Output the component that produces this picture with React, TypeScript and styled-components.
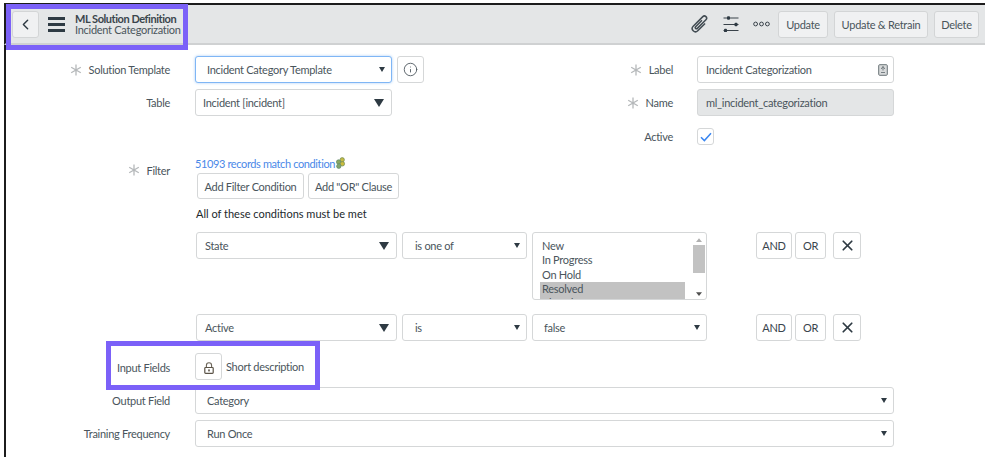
import React from 'react';
import styled, { createGlobalStyle } from 'styled-components';
import { ChevronLeft, Info, X } from 'lucide-react';

const GlobalStyle = createGlobalStyle`
  html, body {
    margin: 0;
    padding: 0;
    background: #fff;
    overflow: hidden;
  }
  body {
    font-family: "Lato", "Open Sans", sans-serif;
    font-size: 11px;
    letter-spacing: -0.28px;
    color: #4a555c;
  }
`;

const Asterisk = () => (
  <AsteriskIcon viewBox="0 0 12 12">
    <path d="M6 0.5v11M1.2 3.2l9.6 5.6M1.2 8.8l9.6-5.6" stroke="#b5b8ba" strokeWidth="1.3" fill="none" />
  </AsteriskIcon>
);

const Caret = ({ small }: { small?: boolean }) => (
  <CaretIcon $small={small} viewBox="0 0 10 8">
    <path d="M0 0h10L5 8z" fill="#2e3a43" />
  </CaretIcon>
);

const PaperclipIcon = () => (
  <svg width="18" height="18" viewBox="0 0 18 18">
    <g transform="rotate(45 9 9)" fill="none" stroke="#414b52" strokeWidth="1.5">
      <path d="M12.2 5v10.4a3.2 3.2 0 0 1-6.4 0V1.8a2.2 2.2 0 0 1 4.4 0V14a1.2 1.2 0 0 1-2.4 0V5" />
    </g>
  </svg>
);

const SlidersIcon = () => (
  <svg width="16" height="16" viewBox="0 0 16 16">
    <path d="M0.5 2h15M0.5 8.5h15M0.5 14.5h15" stroke="#39424a" strokeWidth="1.1" />
    <rect x="4" y="0.3" width="3" height="3.4" rx="1" fill="#2e3a43" />
    <rect x="11.5" y="6.8" width="3" height="3.4" rx="1" fill="#2e3a43" />
    <rect x="1" y="12.8" width="3" height="3.4" rx="1" fill="#2e3a43" />
  </svg>
);

const MoreIcon = () => (
  <svg width="17" height="6" viewBox="0 0 17 6">
    <circle cx="2.6" cy="3" r="1.9" fill="none" stroke="#39424a" strokeWidth="1" />
    <circle cx="8.5" cy="3" r="1.9" fill="none" stroke="#39424a" strokeWidth="1" />
    <circle cx="14.4" cy="3" r="1.9" fill="none" stroke="#39424a" strokeWidth="1" />
  </svg>
);

const LanguageIcon = () => (
  <svg width="10" height="12" viewBox="0 0 10 12">
    <rect x="0.7" y="0.7" width="8.6" height="10.6" rx="1" fill="#d8dadb" stroke="#6b7478" strokeWidth="1" />
    <path d="M5 2.5v4M3.2 5l1.8-2.5L6.8 5M3 8.5h4" stroke="#6b7478" strokeWidth="0.9" fill="none" />
  </svg>
);

const RelatedIcon = () => (
  <svg width="11" height="12" viewBox="0 0 11 12">
    <circle cx="7.2" cy="2.8" r="2.2" fill="#c4bb45" stroke="#6f8a55" strokeWidth="0.7" />
    <circle cx="3.6" cy="5" r="2.2" fill="#8aa660" stroke="#5f8a6a" strokeWidth="0.7" />
    <circle cx="7.4" cy="6.8" r="2.2" fill="#c9bc3c" stroke="#6f8a55" strokeWidth="0.7" />
    <circle cx="3.8" cy="9.2" r="2.2" fill="#82a56c" stroke="#5f8a6a" strokeWidth="0.7" />
  </svg>
);

const LockIcon = () => (
  <svg width="10" height="12" viewBox="0 0 10 12">
    <path d="M2.4 5.5V3.4a2.6 2.6 0 0 1 5.2 0v2.1" fill="none" stroke="#6b6458" strokeWidth="1.1" />
    <rect x="0.8" y="5.5" width="8.4" height="5.8" rx="0.8" fill="none" stroke="#5b5347" strokeWidth="1.2" />
    <rect x="4.2" y="7.4" width="1.6" height="2" fill="#5b5347" />
  </svg>
);

const CheckIcon = () => (
  <svg width="12" height="10" viewBox="0 0 12 10">
    <path d="M1 5.2l3.4 3.4L11 1.2" stroke="#3a86f0" strokeWidth="1.5" fill="none" />
  </svg>
);

const ConditionRow = ({ field, operator, children }: {
  field: string;
  operator: string;
  children: React.ReactNode;
}) => (
  <Condition>
    <ConditionField>
      {field}
      <Caret />
    </ConditionField>
    <OperatorField>
      {operator}
      <Caret small />
    </OperatorField>
    {children}
    <ConditionButtons>
      <SmallButton $width={36}>AND</SmallButton>
      <SmallButton $width={31}>OR</SmallButton>
      <RemoveButton><X size={17} strokeWidth={2.4} color="#2e3a43" /></RemoveButton>
    </ConditionButtons>
  </Condition>
);

export default function App() {
  return (
    <Screen>
      <GlobalStyle />
      <Highlight $left={6} $top={4} $width={182} $height={46} />
      <Highlight $left={106} $top={341} $width={214} $height={49} />
      <Header>
        <BackButton><ChevronLeft size={17} strokeWidth={2} color="#2e3a43" /></BackButton>
        <MenuBars><span /><span /><span /></MenuBars>
        <TitleBlock>
          <strong>ML Solution Definition</strong>
          <span>Incident Categorization</span>
        </TitleBlock>
        <HeaderActions>
          <PaperclipIcon />
          <SlidersIcon />
          <MoreIcon />
          <HeaderButton $width={50}>Update</HeaderButton>
          <HeaderButton $width={94}>Update &amp; Retrain</HeaderButton>
          <HeaderButton $width={45}>Delete</HeaderButton>
        </HeaderActions>
      </Header>
      <Form>
        <TopSection>
          <Column>
            <Row>
              <Label><Asterisk />Solution Template</Label>
              <SelectBox $focused>
                Incident Category Template
                <Caret small />
              </SelectBox>
              <InfoButton><Info size={15} strokeWidth={1.4} color="#4a555c" /></InfoButton>
            </Row>
            <Row>
              <Label>Table</Label>
              <TableSelect>
                Incident [incident]
                <Caret />
              </TableSelect>
            </Row>
          </Column>
          <RightColumn>
            <Row>
              <RightLabel><Asterisk />Label</RightLabel>
              <TextBox>
                Incident Categorization
                <LanguageIcon />
              </TextBox>
            </Row>
            <Row>
              <RightLabel><Asterisk />Name</RightLabel>
              <TextBox $readOnly>ml_incident_categorization</TextBox>
            </Row>
            <ActiveRow>
              <RightLabel>Active</RightLabel>
              <CheckBox><CheckIcon /></CheckBox>
            </ActiveRow>
          </RightColumn>
        </TopSection>
        <FilterSection>
          <Label $top><Asterisk />Filter</Label>
          <FilterBody>
            <RecordCount>51093 records match condition<RelatedIcon /></RecordCount>
            <FilterButtons>
              <OutlineButton $width={107}>Add Filter Condition</OutlineButton>
              <OutlineButton $width={91}>Add "OR" Clause</OutlineButton>
            </FilterButtons>
            <ConditionTitle>All of these conditions must be met</ConditionTitle>
            <ConditionRow field="State" operator="is one of">
              <ListBox>
                <Options>
                  <Option>New</Option>
                  <Option>In Progress</Option>
                  <Option>On Hold</Option>
                  <Option $selected>Resolved</Option>
                  <Option $selected>Closed</Option>
                </Options>
                <ScrollTrack>
                  <ScrollArrow viewBox="0 0 8 5"><path d="M0 5L4 0l4 5z" fill="#b0b0b0" /></ScrollArrow>
                  <ScrollThumb />
                  <ScrollArrow viewBox="0 0 8 5"><path d="M0 0h8L4 5z" fill="#505050" /></ScrollArrow>
                </ScrollTrack>
              </ListBox>
            </ConditionRow>
            <ConditionRow field="Active" operator="is">
              <ValueField>
                false
                <Caret small />
              </ValueField>
            </ConditionRow>
          </FilterBody>
        </FilterSection>
        <InputFieldsRow>
          <InputFieldsLabel>Input Fields</InputFieldsLabel>
          <LockButton><LockIcon /></LockButton>
          <InputFieldsValue>Short description</InputFieldsValue>
        </InputFieldsRow>
        <WideRow>
          <Label>Output Field</Label>
          <WideSelect>
            Category
            <Caret small />
          </WideSelect>
        </WideRow>
        <WideRow>
          <Label>Training Frequency</Label>
          <WideSelect>
            Run Once
            <Caret small />
          </WideSelect>
        </WideRow>
      </Form>
    </Screen>
  );
}

const Screen = styled.div`
  position: relative;
  width: 985px;
  height: 457px;
  box-sizing: border-box;
  padding: 3px 0 0 4px;
  overflow: hidden;
  background: #fff;
`;

const Highlight = styled.div<{ $left: number; $top: number; $width: number; $height: number }>`
  position: absolute;
  left: ${p => p.$left}px;
  top: ${p => p.$top}px;
  width: ${p => p.$width}px;
  height: ${p => p.$height}px;
  box-sizing: border-box;
  border: 5px solid #7b61f8;
  z-index: 2;
`;

const Header = styled.header`
  display: flex;
  align-items: center;
  height: 42px;
  box-sizing: border-box;
  padding: 0 6px 0 6px;
  background: #e4e6e7;
  border-top: 2px solid #1c1c1c;
  border-left: 2px solid #1c1c1c;
  border-bottom: 2px solid #cfd1d2;
`;

const BackButton = styled.button`
  display: flex;
  align-items: center;
  justify-content: center;
  width: 27px;
  height: 27px;
  padding: 0;
  background: #f0f1f2;
  border: 1px solid #d3d5d6;
  border-radius: 3px;
`;

const MenuBars = styled.div`
  display: flex;
  flex-direction: column;
  gap: 3px;
  width: 17px;
  margin-left: 9px;

  span {
    height: 3px;
    background: #2e3a43;
  }
`;

const TitleBlock = styled.div`
  display: flex;
  flex-direction: column;
  margin-left: 10px;
  line-height: 11.5px;

  strong {
    font-weight: 700;
    letter-spacing: -0.45px;
    color: #3a454c;
  }
`;

const HeaderActions = styled.div`
  display: flex;
  align-items: center;
  margin-left: auto;
  gap: 6px;

  svg:nth-child(1) { margin-right: 8px; }
  svg:nth-child(2) { margin-right: 8px; }
  svg:nth-child(3) { margin-right: 2px; }
`;

const HeaderButton = styled.button<{ $width: number }>`
  width: ${p => p.$width}px;
  height: 27px;
  padding: 0;
  font: inherit;
  letter-spacing: inherit;
  color: #4a555c;
  background: #f0f1f2;
  border: 1px solid #d3d5d6;
  border-radius: 3px;
`;

const Form = styled.div`
  border-left: 2px solid #1c1c1c;
  height: 412px;
  padding-top: 11px;
`;

const TopSection = styled.div`
  display: flex;
`;

const Column = styled.div`
  display: flex;
  flex-direction: column;
  gap: 6px;
  width: 600px;
`;

const RightColumn = styled(Column)`
  width: auto;
`;

const Row = styled.div`
  display: flex;
  align-items: center;
  height: 27px;
`;

const ActiveRow = styled(Row)`
  height: 19px;
  margin-top: 5px;
`;

const Label = styled.div<{ $top?: boolean }>`
  display: flex;
  align-items: center;
  justify-content: flex-end;
  flex: none;
  width: 164px;
  margin-right: 25px;
  gap: 7px;
  ${p => p.$top && 'margin-top: 7px; height: 14px;'}
`;

const RightLabel = styled(Label)`
  width: 67px;
  margin-right: 24px;
`;

const InputFieldsLabel = styled(Label)`
  padding-top: 2px;
`;

const AsteriskIcon = styled.svg`
  width: 12px;
  height: 12px;
  flex: none;
`;

const CaretIcon = styled.svg<{ $small?: boolean }>`
  flex: none;
  width: ${p => (p.$small ? 6 : 10)}px;
  height: ${p => (p.$small ? 5 : 8)}px;
  margin-left: auto;
`;

const SelectBox = styled.div<{ $focused?: boolean }>`
  display: flex;
  align-items: center;
  box-sizing: border-box;
  width: 197px;
  height: 27px;
  padding: 0 6px 0 11px;
  background: #fff;
  border: 1px solid ${p => (p.$focused ? '#7fb6f5' : '#d5d7d8')};
  border-radius: 3px;
  ${p => p.$focused && 'box-shadow: 0 0 3px #a9cdf7;'}
`;

const TableSelect = styled(SelectBox)`
  padding: 0 7px 0 7px;
`;

const InfoButton = styled.button`
  display: flex;
  align-items: center;
  justify-content: center;
  width: 27px;
  height: 27px;
  margin-left: 5px;
  padding: 0;
  background: #fff;
  border: 1px solid #d5d7d8;
  border-radius: 3px;
`;

const TextBox = styled.div<{ $readOnly?: boolean }>`
  display: flex;
  align-items: center;
  justify-content: space-between;
  box-sizing: border-box;
  width: 197px;
  height: 27px;
  padding: 0 5px 0 8px;
  background: ${p => (p.$readOnly ? '#e4e6e7' : '#fff')};
  border: 1px solid #d5d7d8;
  border-radius: 3px;
`;

const CheckBox = styled.div`
  display: flex;
  align-items: center;
  justify-content: center;
  box-sizing: border-box;
  width: 17px;
  height: 17px;
  border: 1px solid #d5d7d8;
  border-radius: 3px;
`;

const FilterSection = styled.div`
  display: flex;
  margin-top: 10px;
`;

const FilterBody = styled.div`
  display: flex;
  flex-direction: column;
  flex: none;
`;

const RecordCount = styled.div`
  display: flex;
  align-items: center;
  height: 14px;
  letter-spacing: -0.38px;
  color: #4a88e8;
`;

const FilterButtons = styled.div`
  display: flex;
  gap: 4px;
  margin: 3px 0 0 2px;
`;

const OutlineButton = styled.button<{ $width: number }>`
  width: ${p => p.$width}px;
  height: 26px;
  padding: 0;
  white-space: nowrap;
  font: inherit;
  letter-spacing: inherit;
  color: #4a555c;
  background: #fff;
  border: 1px solid #d5d7d8;
  border-radius: 3px;
`;

const ConditionTitle = styled.div`
  margin: 8px 0 0 1px;
  height: 14px;
  line-height: 14px;
  letter-spacing: 0;
  color: #22282c;
`;

const Condition = styled.div`
  display: flex;
  align-items: flex-start;
  margin: 11px 0 0 1px;
  gap: 5px;

  & + & {
    margin-top: 14px;
  }
`;

const ConditionField = styled(SelectBox)`
  width: 201px;
  padding: 0 7px 0 8px;
`;

const OperatorField = styled(SelectBox)`
  width: 125px;
  padding: 0 6px 0 12px;
`;

const ValueField = styled(SelectBox)`
  width: 175px;
`;

const ListBox = styled.div`
  display: flex;
  box-sizing: border-box;
  width: 175px;
  height: 68px;
  overflow: hidden;
  background: #fff;
  border: 1px solid #d5d7d8;
  border-radius: 3px;
`;

const Options = styled.div`
  flex: 1;
  padding: 6px 7px 0 7px;
`;

const Option = styled.div<{ $selected?: boolean }>`
  height: 14.3px;
  line-height: 14.3px;
  padding-left: 2px;
  background: ${p => (p.$selected ? '#c2c2c2' : 'transparent')};
`;

const ScrollTrack = styled.div`
  display: flex;
  flex-direction: column;
  align-items: center;
  justify-content: space-between;
  width: 13px;
  margin-right: 1px;
  padding: 5px 0 3px;
`;

const ScrollArrow = styled.svg`
  width: 6px;
  height: 4px;
`;

const ScrollThumb = styled.div`
  width: 12px;
  height: 28px;
  margin-bottom: 17px;
  background: #c2c2c2;
`;

const ConditionButtons = styled.div`
  display: flex;
  margin-left: 44px;
  gap: 3px;
`;

const SmallButton = styled.button<{ $width: number }>`
  width: ${p => p.$width}px;
  height: 27px;
  padding: 0;
  font: inherit;
  letter-spacing: inherit;
  color: #3a454c;
  background: #fff;
  border: 1px solid #d5d7d8;
  border-radius: 3px;
`;

const RemoveButton = styled.button`
  display: flex;
  align-items: center;
  justify-content: center;
  width: 28px;
  height: 27px;
  margin-left: 4px;
  padding: 0;
  background: #fff;
  border: 1px solid #d5d7d8;
  border-radius: 3px;
`;

const InputFieldsRow = styled(Row)`
  margin: 12px 0 7px;
`;

const LockButton = styled(InfoButton)`
  margin-left: 0;
  padding-top: 2px;
`;

const InputFieldsValue = styled.span`
  margin: 0 0 0 4px;
`;

const WideRow = styled(Row)`
  & + & {
    margin-top: 6px;
  }
`;

const WideSelect = styled(SelectBox)`
  width: 699px;
`;
